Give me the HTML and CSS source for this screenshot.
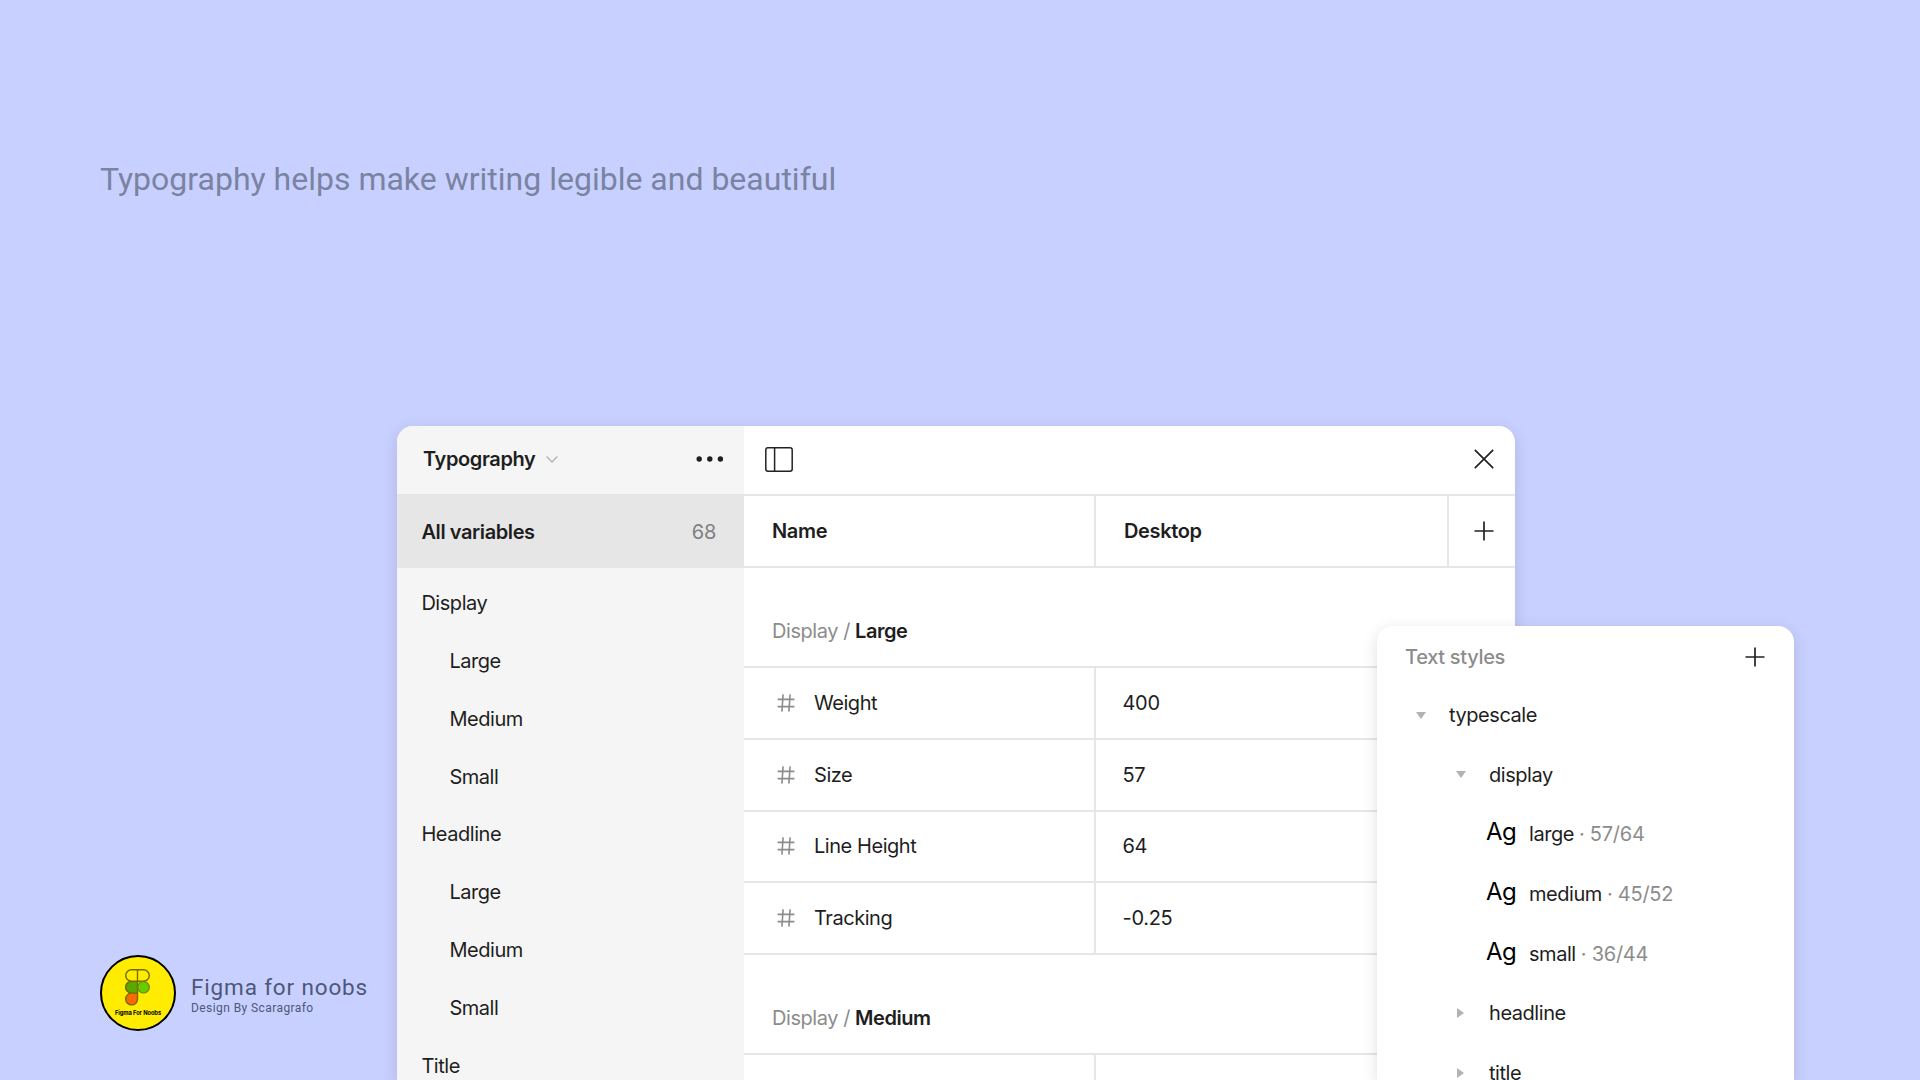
FILE: index.html
```html
<!DOCTYPE html>
<html lang="en">
<head>
<meta charset="utf-8">
<title>Typography</title>
<link rel="stylesheet" href="styles.css">
</head>
<body>
<svg class="defs" width="0" height="0">
  <symbol id="hash" viewBox="0 0 18 18"><path d="M6.1 .4 4.9 17.6M13.1 .4 11.9 17.6M.6 5.4H17.4M.6 12.6H17.4" fill="none" stroke="#8c8c8c" stroke-width="1.6"/></symbol>
  <symbol id="plus" viewBox="0 0 20 20"><path d="M10 .5V19.5M.5 10H19.5" fill="none" stroke="#222" stroke-width="1.7"/></symbol>
  <symbol id="down" viewBox="0 0 10 7"><path d="M0 0H10L5 7Z" fill="#b3b3b3"/></symbol>
  <symbol id="right" viewBox="0 0 7 10"><path d="M0 0V10L7 5Z" fill="#b3b3b3"/></symbol>
</svg>
<header class="hero"><h1 class="tagline">Typography helps make writing legible and beautiful</h1></header>
<main class="stage">
  <aside class="brand">
    <div class="badge">
      <svg class="badge-mark" viewBox="0 0 25 36.6" width="25" height="36.6">
        <path d="M12.5 12.3H6.5a5.8 5.8 0 0 0 0 11.8h6Z" fill="#5aa800"/>
        <circle cx="18.5" cy="18.2" r="5.8" fill="#66cc00"/>
        <path d="M12.5 24.1H6.5a5.8 5.8 0 1 0 6 5.8Z" fill="#ff6a00"/>
        <path d="M12.5 .7H6.5a5.8 5.8 0 0 0 0 11.6h12a5.8 5.8 0 0 0 0-11.6h-6ZM12.5 .7V30a5.9 5.9 0 1 1-6-5.9h6M6.5 12.3a5.8 5.8 0 0 0 0 11.8" fill="none" stroke="#736b00" stroke-width="1.4"/>
        <circle cx="18.5" cy="18.2" r="5.8" fill="none" stroke="#6f8a00" stroke-width="1.2"/>
      </svg>
      <span class="badge-text">Figma For Noobs</span>
    </div>
    <div class="brand-text">
      <div class="brand-name">Figma for noobs</div>
      <div class="brand-by">Design By Scaragrafo</div>
    </div>
  </aside>

  <section class="variables">
    <nav class="sidebar">
      <div class="collection">
        <span class="collection-name">Typography</span>
        <svg class="chevron" width="12" height="7" viewBox="0 0 12 7"><path d="M.6 .6 6 6 11.4 .6" fill="none" stroke="#b3b3b3" stroke-width="1.4"/></svg>
        <svg class="more" width="28" height="6" viewBox="0 0 28 6" fill="#1e1e1e"><circle cx="3.2" cy="3" r="2.7"/><circle cx="13.8" cy="3" r="2.7"/><circle cx="24.4" cy="3" r="2.7"/></svg>
      </div>
      <div class="all"><span class="all-name">All variables</span><span class="count">68</span></div>
      <ul class="groups">
        <li>Display</li>
        <li class="sub">Large</li>
        <li class="sub">Medium</li>
        <li class="sub">Small</li>
        <li>Headline</li>
        <li class="sub">Large</li>
        <li class="sub">Medium</li>
        <li class="sub">Small</li>
        <li>Title</li>
      </ul>
    </nav>
    <div class="table">
      <div class="toolbar">
        <svg width="28" height="25" viewBox="0 0 28 25"><rect x=".8" y=".8" width="26.4" height="23.4" rx="2.2" fill="none" stroke="#222" stroke-width="1.5"/><path d="M9.6 1V24" stroke="#222" stroke-width="1.5"/></svg>
        <svg width="20" height="20" viewBox="0 0 20 20"><path d="M.8 .8 19.2 19.2M19.2 .8 .8 19.2" fill="none" stroke="#222" stroke-width="1.7"/></svg>
      </div>
      <div class="row head">
        <div class="cell">Name</div><div class="cell mode">Desktop</div>
        <div class="cell add"><svg width="20" height="20"><use href="#plus"/></svg></div>
      </div>
      <div class="group-title"><span class="path">Display /</span> <b class="leaf">Large</b></div>
      <div class="row"><div class="cell"><svg class="hash" width="18" height="18"><use href="#hash"/></svg>Weight</div><div class="cell value">400</div></div>
      <div class="row"><div class="cell"><svg class="hash" width="18" height="18"><use href="#hash"/></svg>Size</div><div class="cell value">57</div></div>
      <div class="row"><div class="cell"><svg class="hash" width="18" height="18"><use href="#hash"/></svg>Line Height</div><div class="cell value">64</div></div>
      <div class="row"><div class="cell"><svg class="hash" width="18" height="18"><use href="#hash"/></svg>Tracking</div><div class="cell value">-0.25</div></div>
      <div class="group-title"><span class="path">Display /</span> <b class="leaf">Medium</b></div>
      <div class="row last"><div class="cell"></div><div class="cell value"></div></div>
    </div>
  </section>

  <section class="styles">
    <div class="styles-head"><span class="styles-title">Text styles</span><svg width="20" height="20"><use href="#plus"/></svg></div>
    <div class="node level-1"><svg class="caret" width="10" height="7"><use href="#down"/></svg>typescale</div>
    <div class="node level-2"><svg class="caret" width="10" height="7"><use href="#down"/></svg>display</div>
    <div class="node style"><span class="ag">Ag</span><span>large</span><span class="meta">· 57/64</span></div>
    <div class="node style"><span class="ag">Ag</span><span>medium</span><span class="meta">· 45/52</span></div>
    <div class="node style"><span class="ag">Ag</span><span>small</span><span class="meta">· 36/44</span></div>
    <div class="node level-2"><svg class="caret closed" width="7" height="10"><use href="#right"/></svg>headline</div>
    <div class="node level-2"><svg class="caret closed" width="7" height="10"><use href="#right"/></svg>title</div>
  </section>
</main>
</body>
</html>
```
FILE: styles.css
```css
* { box-sizing: border-box; }
html, body { margin: 0; height: 1080px; overflow: hidden; }
body {
  background: #c8d0ff;
  color: #1e1e1e;
  font: 400 20px/24px Inter, "Liberation Sans", sans-serif;
  letter-spacing: -0.45px;
}
svg { display: block; flex: none; }
.defs { display: none; }
ul { list-style: none; margin: 0; padding: 0; }

.hero { height: 426px; padding: 159px 100px 0; }
.tagline {
  margin: 0;
  font: 400 32px/40px Roboto, sans-serif;
  letter-spacing: 0;
  color: #7b83a2;
}

.stage { display: flex; align-items: flex-start; height: 654px; }

.brand {
  flex: none;
  width: 397px;
  height: 654px;
  padding: 529px 0 0 100px;
  display: flex;
  align-items: flex-start;
  gap: 15px;
  font-family: Roboto, sans-serif;
  color: #4d5878;
}
.badge {
  width: 76px;
  height: 76px;
  border: 2px solid #000;
  border-radius: 50%;
  background: #ffec00;
  display: flex;
  flex-direction: column;
  align-items: center;
  padding-top: 12px;
}
.badge-mark { margin-right: 1px; }
.badge-text {
  margin-top: 2px;
  font: 700 5.8px/9px Inter, sans-serif;
  letter-spacing: -0.1px;
  color: #000;
  white-space: nowrap;
}
.brand-text { padding-top: 19px; white-space: nowrap; }
.brand-name { font-size: 22.5px; line-height: 27px; letter-spacing: 0.85px; }
.brand-by { font-size: 12px; line-height: 14px; letter-spacing: 0.42px; }

.variables {
  flex: none;
  width: 1118px;
  height: 654px;
  display: flex;
  border-radius: 16px 16px 0 0;
  overflow: hidden;
  background: #fff;
  box-shadow: 0 4px 16px rgba(0, 0, 0, 0.13);
}

.sidebar { width: 347px; background: #f5f5f5; }
.collection { height: 68px; display: flex; align-items: center; padding: 0 20.5px 2px 26px; }
.collection-name { font-weight: 620; letter-spacing: -0.38px; }
.chevron { margin-left: 10px; }
.more { margin-left: auto; }
.all {
  height: 74px;
  display: flex;
  align-items: center;
  justify-content: space-between;
  padding: 2px 28px 0 24.4px;
  background: #e6e6e6;
}
.all-name { font-weight: 620; letter-spacing: -0.4px; }
.count { color: #808080; letter-spacing: -0.3px; }
.groups { padding-top: 6px; }
.groups li { height: 57.85px; line-height: 58px; padding-left: 24.4px; }
.groups .sub { padding-left: 52.4px; }

.table { width: 771px; }
.toolbar {
  height: 70px;
  display: flex;
  align-items: center;
  justify-content: space-between;
  padding: 0 21.5px 2px 21px;
  border-bottom: 2px solid #e6e6e6;
}
.row {
  height: 71.8px;
  display: grid;
  grid-template-columns: 352px 1fr;
  border-bottom: 2px solid #e6e6e6;
}
.last { height: 26px; border-bottom: 0; }
.cell { display: flex; align-items: center; padding-left: 28px; border-right: 2px solid #e6e6e6; }
.cell:last-child { border-right: 0; }
.value { padding-left: 26.5px; letter-spacing: -0.3px; }
.head { height: 72px; grid-template-columns: 352px 353px 1fr; font-weight: 620; }
.head .cell { letter-spacing: -0.35px; }
.add { padding-left: 24.5px; }
.hash { margin: 0 19px 0 5px; }
.group-title {
  height: 100px;
  padding: 51px 0 0 28px;
  border-bottom: 2px solid #e6e6e6;
}
.path { color: #8c8c8c; }
.leaf { font-weight: 620; }

.styles {
  flex: none;
  position: relative;
  width: 417px;
  height: 454px;
  overflow: hidden;
  margin: 200px 0 0 -138px;
  border-radius: 16px 16px 0 0;
  background: #fff;
  box-shadow: 0 4px 16px rgba(0, 0, 0, 0.13);
}
.styles-head {
  height: 59.5px;
  display: flex;
  align-items: center;
  justify-content: space-between;
  padding: 2px 29px 0 28px;
}
.styles-title { font-weight: 500; color: #8c8c8c; letter-spacing: -0.32px; }
.node { height: 59.6px; display: flex; align-items: center; }
.level-1 { padding-left: 39px; }
.level-2 { padding-left: 79px; }
.caret { margin-right: 23px; }
.closed { margin: 0 25px 0 1px; }
.style { padding-left: 109px; gap: 5px; }
.ag { width: 38px; margin-bottom: 4px; font-size: 24px; letter-spacing: -0.5px; color: #000; }
.meta { color: #8c8c8c; letter-spacing: -0.25px; }
```
